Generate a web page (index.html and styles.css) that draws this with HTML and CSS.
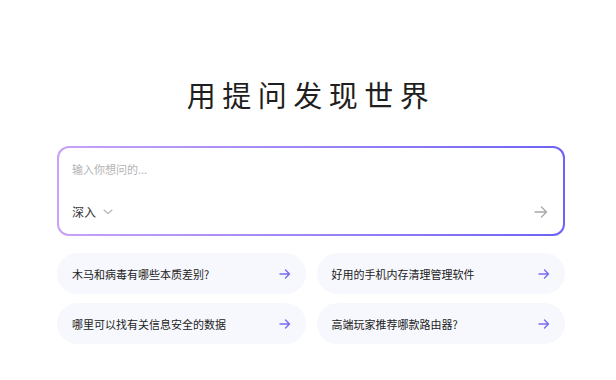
FILE: index.html
```html
<!DOCTYPE html>
<html lang="zh-CN">
<head>
    <meta charset="UTF-8">
    <meta name="viewport" content="width=device-width, initial-scale=1.0">
    <title>用提问发现世界</title>
    <link rel="stylesheet" href="styles.css">
</head>
<body>
    <div class="page">
        <h1 class="title">用提问发现世界</h1>

        <div class="ask-box">
            <div class="ask-inner">
                <div class="placeholder">输入你想问的...</div>
                <div class="ask-bottom">
                    <div class="mode">深入
                        <svg class="chevron" width="10" height="6" viewBox="0 0 10 6"><path d="M1 1l4 3.5L9 1" fill="none" stroke="#b5b5b5" stroke-width="1.1" stroke-linecap="round"/></svg>
                    </div>
                    <svg class="send" width="14" height="12" viewBox="0 0 14 12"><path d="M1 6h11.5M7.5 1l5 5-5 5" fill="none" stroke="#a8a8ad" stroke-width="1.3" stroke-linecap="round" stroke-linejoin="round"/></svg>
                </div>
            </div>
        </div>

        <div class="suggestions">
            <div class="card"><span>木马和病毒有哪些本质差别?</span>
                <svg width="12" height="10" viewBox="0 0 12 10"><path d="M1 5h9.5M6.5 1l4 4-4 4" fill="none" stroke="#7a6cf2" stroke-width="1.4" stroke-linecap="round" stroke-linejoin="round"/></svg></div>
            <div class="card"><span>好用的手机内存清理管理软件</span>
                <svg width="12" height="10" viewBox="0 0 12 10"><path d="M1 5h9.5M6.5 1l4 4-4 4" fill="none" stroke="#7a6cf2" stroke-width="1.4" stroke-linecap="round" stroke-linejoin="round"/></svg></div>
            <div class="card"><span>哪里可以找有关信息安全的数据</span>
                <svg width="12" height="10" viewBox="0 0 12 10"><path d="M1 5h9.5M6.5 1l4 4-4 4" fill="none" stroke="#7a6cf2" stroke-width="1.4" stroke-linecap="round" stroke-linejoin="round"/></svg></div>
            <div class="card"><span>高端玩家推荐哪款路由器?</span>
                <svg width="12" height="10" viewBox="0 0 12 10"><path d="M1 5h9.5M6.5 1l4 4-4 4" fill="none" stroke="#7a6cf2" stroke-width="1.4" stroke-linecap="round" stroke-linejoin="round"/></svg></div>
        </div>
    </div>
</body>
</html>
```

FILE: styles.css
```css
body {
    margin: 0;
    background: #fff;
    font-family: "Noto Sans CJK SC", "Noto Sans", sans-serif;
    color: #222;
}
.page {
    width: 508px;
    margin-left: 57px;
    padding-top: 74px;
}
.title {
    margin: 0 0 32px;
    text-align: center;
    font-size: 29px;
    font-weight: 400;
    letter-spacing: 6.5px;
    line-height: 40px;
    color: #1f1f1f;
}
.ask-box {
    height: 90px;
    padding: 2px;
    box-sizing: border-box;
    border-radius: 12px;
    background: linear-gradient(90deg, #c8a2f8, #9d85f6 50%, #6c62f4);
}
.ask-inner {
    height: 100%;
    box-sizing: border-box;
    background: #fff;
    border-radius: 10px;
    padding: 13px 13px 0 13px;
    display: flex;
    flex-direction: column;
}
.placeholder {
    font-size: 11px;
    color: #b3b3b3;
    line-height: 16px;
}
.ask-bottom {
    margin-top: 26px;
    display: flex;
    align-items: center;
    justify-content: space-between;
}
.mode {
    font-size: 12px;
    line-height: 18px;
    color: #333;
    display: flex;
    align-items: center;
    gap: 7px;
}
.send {
    margin-right: 2px;
}
.suggestions {
    margin-top: 17px;
    display: grid;
    grid-template-columns: 1fr 1fr;
    gap: 9px 11px;
}
.card {
    height: 41px;
    border-radius: 21px;
    background: #f7f8fd;
    display: flex;
    align-items: center;
    justify-content: space-between;
    padding: 0 15px 0 15px;
    font-size: 11px;
    color: #222;
}
```
